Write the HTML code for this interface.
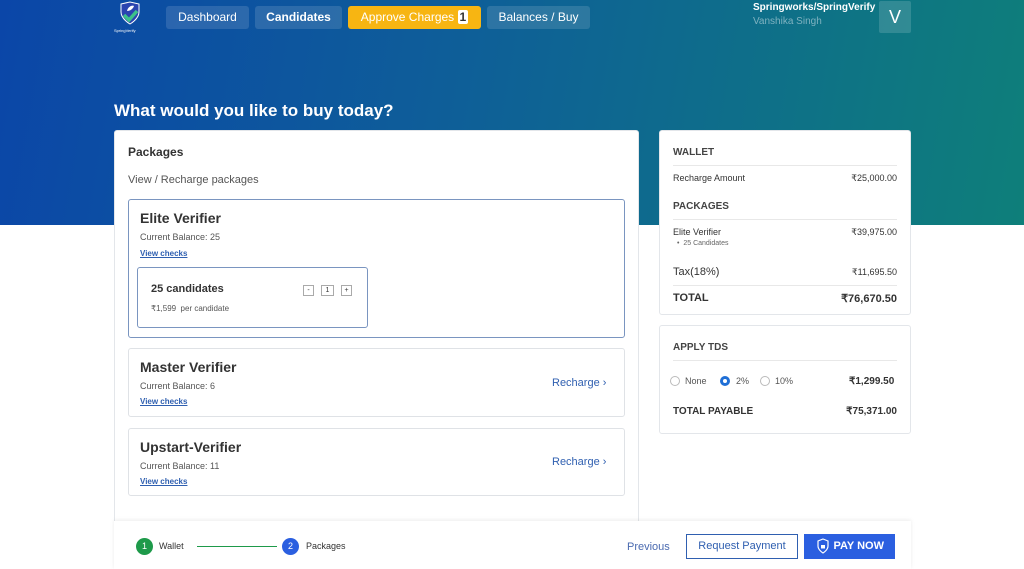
<!DOCTYPE html>
<html><head><meta charset="utf-8"><style>
*{box-sizing:border-box;margin:0;padding:0}
body{width:1024px;height:569px;overflow:hidden;background:#fff;font-family:"Liberation Sans",sans-serif;color:#333;position:relative}
.banner{position:absolute;left:0;top:0;width:1024px;height:225px;background:linear-gradient(100deg,#0b46a8 0%,#0e5f98 45%,#0e7f7a 100%)}
.a{position:absolute}
.nav{position:absolute;top:6px;height:23px;border-radius:3px;background:rgba(255,255,255,0.13);color:#fff;font-size:12px;line-height:23px;text-align:center}
.card{position:absolute;background:#fff;border:1px solid #e3e6ea;border-radius:3px}
.pk{position:absolute;left:128px;width:497px;border:1px solid #dfe2e6;border-radius:3px;background:#fff}
.pk h3{position:absolute;left:11px;font-size:14px;font-weight:bold;color:#333}
.small{font-size:9px;color:#555}
.vc{font-size:8px;color:#2f5fb0;text-decoration:underline;font-weight:bold}
.row{position:absolute;left:673px;width:224px;font-size:9px;color:#333;display:flex;justify-content:space-between}
.hd{position:absolute;left:673px;font-size:10px;font-weight:bold;color:#444}
.ln{position:absolute;left:673px;width:224px;height:1px;background:#e8e8e8}
.rc{position:absolute;left:552px;font-size:11px;color:#2f5fb0}
</style></head><body>
<div class="banner"></div>
<svg class="a" style="left:118px;top:1px" width="24" height="26" viewBox="0 0 24 26"><path d="M3 3l9-2 9 2v8c0 7-9 12-9 12S3 18 3 11z" fill="#2a44b0" stroke="#fff" stroke-width="1"/><path d="M6 14l5 5 8-9" stroke="#3cc28a" stroke-width="3.5" fill="none"/><path d="M9 10c1-5 6-6 7-5-1 3-4 5-7 5z" fill="#fff"/></svg>
<div class="a" style="left:114px;top:28px;font-size:4px;color:#fff">SpringVerify</div>
<div class="nav" style="left:166px;width:83px">Dashboard</div>
<div class="nav" style="left:255px;width:87px;font-weight:bold">Candidates</div>
<div class="nav" style="left:348px;width:133px;background:#f7b512">Approve Charges <span style="background:#fff;color:#333;padding:0 2px;border-radius:2px;font-weight:bold">1</span></div>
<div class="nav" style="left:487px;width:103px">Balances / Buy</div>
<div class="a" style="left:753px;top:2px;font-size:10px;font-weight:bold;color:#fff">Springworks/SpringVerify</div>
<div class="a" style="left:753px;top:16px;font-size:10px;color:#7fb2c0">Vanshika Singh</div>
<div class="a" style="left:879px;top:1px;width:32px;height:32px;background:rgba(255,255,255,0.15);color:#fff;font-size:18px;line-height:32px;text-align:center;border-radius:2px">V</div>
<div class="a" style="left:114px;top:101px;font-size:17px;font-weight:bold;color:#fff">What would you like to buy today?</div>

<div class="card" style="left:114px;top:130px;width:525px;height:400px"></div>
<div class="a" style="left:128px;top:145px;font-size:12px;font-weight:bold">Packages</div>
<div class="a" style="left:128px;top:174px;font-size:11px;color:#555">View / Recharge packages</div>

<div class="pk" style="top:199px;height:139px;border-color:#7a95c0">
<h3 style="top:10px">Elite Verifier</h3>
<div class="a small" style="left:11px;top:32px">Current Balance: 25</div>
<div class="a vc" style="left:11px;top:49px">View checks</div>
<div class="a" style="left:8px;top:67px;width:231px;height:61px;border:1px solid #7a95c0;border-radius:3px">
<div class="a" style="left:13px;top:15px;font-size:11px;font-weight:bold">25 candidates</div>
<div class="a" style="left:13px;top:36px;font-size:8px;color:#555">₹1,599 &nbsp;per candidate</div>
<div class="a" style="left:165px;top:17px;width:11px;height:11px;border:1px solid #aaa;font-size:7px;text-align:center;line-height:9px">-</div>
<div class="a" style="left:183px;top:17px;width:13px;height:11px;border:1px solid #aaa;font-size:7px;text-align:center;line-height:9px">1</div>
<div class="a" style="left:203px;top:17px;width:11px;height:11px;border:1px solid #aaa;font-size:7px;text-align:center;line-height:9px">+</div>
</div></div>

<div class="pk" style="top:348px;height:69px">
<h3 style="top:10px">Master Verifier</h3>
<div class="a small" style="left:11px;top:32px">Current Balance: 6</div>
<div class="a vc" style="left:11px;top:48px">View checks</div>
</div>
<div class="rc" style="top:377px">Recharge ›</div>
<div class="pk" style="top:428px;height:68px">
<h3 style="top:10px">Upstart-Verifier</h3>
<div class="a small" style="left:11px;top:32px">Current Balance: 11</div>
<div class="a vc" style="left:11px;top:48px">View checks</div>
</div>
<div class="rc" style="top:456px">Recharge ›</div>

<div class="card" style="left:659px;top:130px;width:252px;height:185px"></div>
<div class="hd" style="top:147px">WALLET</div>
<div class="ln" style="top:165px"></div>
<div class="row" style="top:173px"><span>Recharge Amount</span><span>₹25,000.00</span></div>
<div class="hd" style="top:201px">PACKAGES</div>
<div class="ln" style="top:219px"></div>
<div class="row" style="top:227px"><span>Elite Verifier</span><span>₹39,975.00</span></div>
<div class="a" style="left:677px;top:240px;font-size:7px;color:#666">• &nbsp;25 Candidates</div>
<div class="row" style="top:266px;font-size:11px;align-items:center"><span>Tax(18%)</span><span style="font-size:9px">₹11,695.50</span></div>
<div class="ln" style="top:285px"></div>
<div class="row" style="top:292px;font-size:11px;font-weight:bold"><span>TOTAL</span><span>₹76,670.50</span></div>

<div class="card" style="left:659px;top:325px;width:252px;height:109px"></div>
<div class="hd" style="top:342px">APPLY TDS</div>
<div class="ln" style="top:360px"></div>
<div class="a" style="left:670px;top:376px;width:10px;height:10px;border:1px solid #bbb;border-radius:50%"></div>
<div class="a" style="left:685px;top:376px;font-size:9px;color:#555">None</div>
<div class="a" style="left:720px;top:376px;width:10px;height:10px;border:3px solid #1f6fd6;border-radius:50%"></div>
<div class="a" style="left:736px;top:376px;font-size:9px;color:#555">2%</div>
<div class="a" style="left:760px;top:376px;width:10px;height:10px;border:1px solid #bbb;border-radius:50%"></div>
<div class="a" style="left:775px;top:376px;font-size:9px;color:#555">10%</div>
<div class="a" style="left:849px;top:376px;font-size:10px;font-weight:bold">₹1,299.50</div>
<div class="row" style="top:406px;font-size:10px;font-weight:bold"><span>TOTAL PAYABLE</span><span>₹75,371.00</span></div>

<div class="a" style="left:114px;top:521px;width:797px;height:48px;background:#fff;box-shadow:0 -1px 4px rgba(0,0,0,0.08)"></div>
<div class="a" style="left:136px;top:538px;width:17px;height:17px;border-radius:50%;background:#1e9a4a;color:#fff;font-size:9px;text-align:center;line-height:17px">1</div>
<div class="a" style="left:159px;top:541px;font-size:9px">Wallet</div>
<div class="a" style="left:197px;top:546px;width:80px;height:1px;background:#1e9a4a"></div>
<div class="a" style="left:282px;top:538px;width:17px;height:17px;border-radius:50%;background:#2b5fe0;color:#fff;font-size:9px;text-align:center;line-height:17px">2</div>
<div class="a" style="left:306px;top:541px;font-size:9px">Packages</div>
<div class="a" style="left:627px;top:541px;font-size:11px;color:#4a6ab0">Previous</div>
<div class="a" style="left:686px;top:534px;width:112px;height:25px;border:1px solid #2f5fb0;color:#2f5fb0;font-size:11px;line-height:23px;text-align:center">Request Payment</div>
<div class="a" style="left:804px;top:534px;width:91px;height:25px;background:#2b5fe0;color:#fff;font-size:11px;font-weight:bold;line-height:25px;text-align:right;padding-right:11px">PAY NOW</div>
<svg class="a" style="left:816px;top:538px" width="14" height="17" viewBox="0 0 14 17"><path d="M7 1l5 2v5c0 4-5 7-5 7S2 12 2 8V3z" fill="none" stroke="#fff" stroke-width="1.2"/><rect x="5" y="7" width="4" height="3.5" fill="#fff"/></svg>
</body></html>
